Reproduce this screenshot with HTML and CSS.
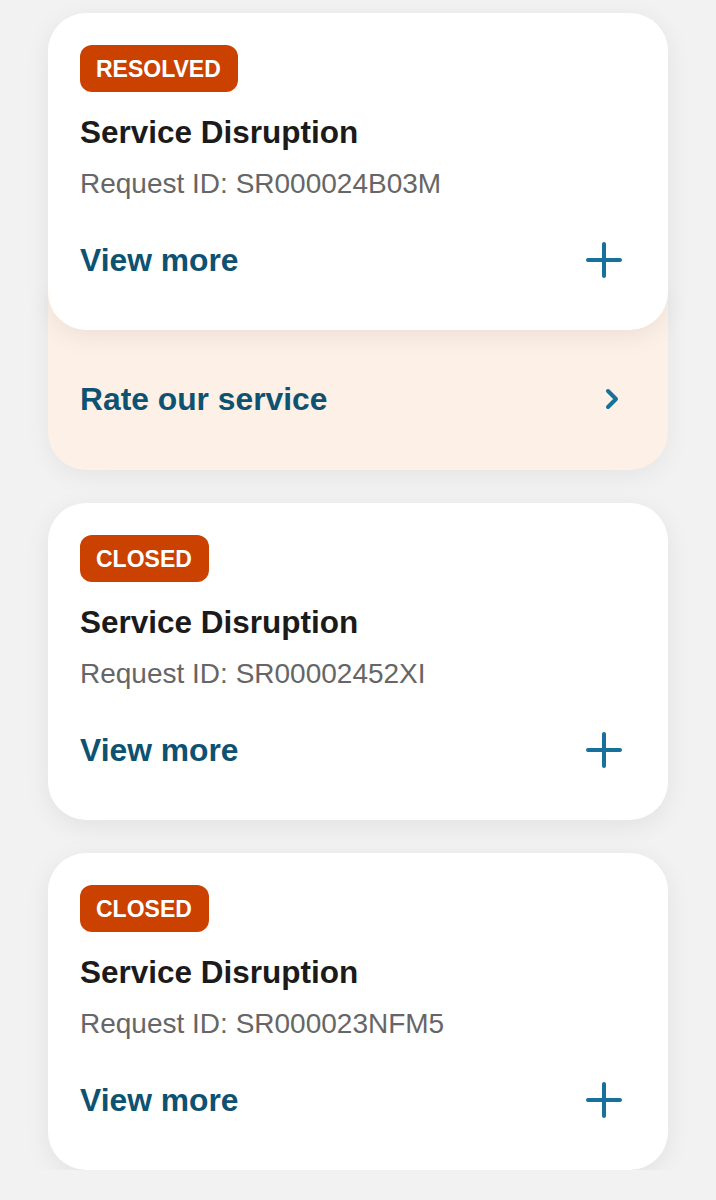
FILE: index.html
```html
<!DOCTYPE html>
<html lang="en">
<head>
    <meta charset="UTF-8">
    <meta name="viewport" content="width=device-width, initial-scale=1.0">
    <title>Service Requests</title>
    <link rel="stylesheet" href="styles.css">
</head>
<body>

<main class="request-list">
    <!-- Resolved request with rating prompt -->
    <section class="request-group">
        <div class="request-card">
            <span class="status-badge">RESOLVED</span>
            <h2 class="request-title">Service Disruption</h2>
            <p class="request-id">Request ID: SR000024B03M</p>
            <div class="view-row">
                <span class="view-more">View more</span>
                <svg class="plus-icon" viewBox="0 0 36 36" width="36" height="36">
                    <path d="M18 2 V34 M2 18 H34"/>
                </svg>
            </div>
        </div>
        <div class="rate-panel">
            <span class="rate-text">Rate our service</span>
            <svg class="chevron-icon" viewBox="0 0 14 22" width="14" height="22">
                <path d="M3 3 L11 11 L3 19"/>
            </svg>
        </div>
    </section>

    <section class="request-group">
        <div class="request-card">
            <span class="status-badge">CLOSED</span>
            <h2 class="request-title">Service Disruption</h2>
            <p class="request-id">Request ID: SR00002452XI</p>
            <div class="view-row">
                <span class="view-more">View more</span>
                <svg class="plus-icon" viewBox="0 0 36 36" width="36" height="36">
                    <path d="M18 2 V34 M2 18 H34"/>
                </svg>
            </div>
        </div>
    </section>

    <section class="request-group">
        <div class="request-card">
            <span class="status-badge">CLOSED</span>
            <h2 class="request-title">Service Disruption</h2>
            <p class="request-id">Request ID: SR000023NFM5</p>
            <div class="view-row">
                <span class="view-more">View more</span>
                <svg class="plus-icon" viewBox="0 0 36 36" width="36" height="36">
                    <path d="M18 2 V34 M2 18 H34"/>
                </svg>
            </div>
        </div>
    </section>
</main>

</body>
</html>
```

FILE: styles.css
```css
body {
    margin: 0;
    font-family: "Liberation Sans", Arial, sans-serif;
    background-color: #f2f2f2;
}
.request-list {
    display: flex;
    flex-direction: column;
    gap: 33px;
    width: 620px;
    margin-left: 48px;
    padding-top: 13px;
}
.request-group {
    display: flex;
    flex-direction: column;
}
.request-card {
    position: relative;
    z-index: 1;
    display: flex;
    flex-direction: column;
    align-items: flex-start;
    height: 317px;
    box-sizing: border-box;
    padding: 32px 46px 0 32px;
    background-color: #fff;
    border-radius: 38px;
    box-shadow: 0 6px 26px rgba(0, 0, 0, 0.07);
}
.status-badge {
    height: 47px;
    line-height: 48px;
    padding: 0 17px 0 16px;
    font-size: 23px;
    font-weight: bold;
    color: #fff;
    background-color: #cb4100;
    border-radius: 12px;
}
.request-title {
    margin: 20px 0 0;
    font-size: 31.5px;
    line-height: 40px;
    font-weight: bold;
    color: #1b1b1b;
}
.request-id {
    margin: 14px 0 0;
    font-size: 28px;
    line-height: 36px;
    color: #666;
}
.view-row {
    align-self: stretch;
    display: flex;
    justify-content: space-between;
    align-items: center;
    margin-top: 38px;
    height: 40px;
}
.view-more,
.rate-text {
    font-size: 31.8px;
    font-weight: bold;
    color: #0e5271;
}
.plus-icon path,
.chevron-icon path {
    fill: none;
    stroke: #17719a;
    stroke-width: 4;
    stroke-linecap: round;
    stroke-linejoin: round;
}
.rate-panel {
    display: flex;
    justify-content: space-between;
    align-items: center;
    height: 138px;
    margin-top: -40px;
    padding: 40px 49px 2px 32px;
    background-color: #fdf0e7;
    border-radius: 0 0 38px 38px;
    box-shadow: 0 6px 26px rgba(0, 0, 0, 0.06);
}
```
